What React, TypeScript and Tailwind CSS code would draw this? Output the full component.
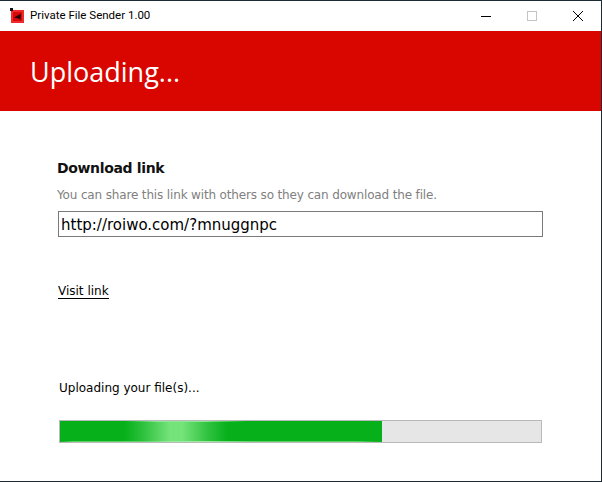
function AppIcon() {
  return (
    <svg width="16" height="16" viewBox="0 0 16 16" className="shrink-0">
      <rect x="1" y="2" width="13" height="13" fill="#ee2a2a" />
      <rect x="3" y="4" width="9" height="9" fill="#d80808" />
      <rect x="0" y="0" width="3" height="3" fill="#111" />
      <path d="M4 9.5 11 5.5 10.5 12 8.5 10.5Z" fill="#2a0505" />
    </svg>
  );
}

const gloss =
  'linear-gradient(90deg,#06b01b 0%,#06b01b 20%,#2fc23f 26%,#74e37a 34%,#74e37a 38%,#2fc23f 46%,#06b01b 52%,#06b01b 100%)';

export default function App() {
  return (
    <div className="flex h-[482px] w-[602px] flex-col overflow-hidden border border-l-0 border-[#1c2b36] bg-white font-['DejaVu_Sans',sans-serif]">
      {/* title bar */}
      <div className="flex h-[30px] shrink-0 items-center bg-white pl-[10px]">
        <AppIcon />
        <span className="ml-[4px] font-['Roboto',sans-serif] text-[11.5px] text-black">
          Private File Sender 1.00
        </span>
        <div className="ml-auto flex items-center">
          <div className="flex h-[30px] w-[46px] items-center justify-center">
            <svg width="10" height="10" viewBox="0 0 10 10">
              <path d="M0 5.5H10" stroke="#000" strokeWidth="1" />
            </svg>
          </div>
          <div className="flex h-[30px] w-[46px] items-center justify-center">
            <svg width="10" height="10" viewBox="0 0 10 10">
              <rect x="0.5" y="0.5" width="9" height="9" fill="none" stroke="#c4c4c4" />
            </svg>
          </div>
          <div className="flex h-[30px] w-[46px] items-center justify-center">
            <svg width="10" height="10" viewBox="0 0 10 10">
              <path d="M0 0 10 10M10 0 0 10" stroke="#000" strokeWidth="1" />
            </svg>
          </div>
        </div>
      </div>

      {/* red header */}
      <div className="flex h-[80px] shrink-0 items-center bg-[#d90600] pl-[30px] pt-[3px]">
        <h1 className="font-['Open_Sans',sans-serif] text-[27px] text-white">Uploading...</h1>
      </div>

      {/* body */}
      <div className="flex flex-1 flex-col pl-[57px] pr-[58px] pt-[47px]">
        <div className="text-[14px] leading-[20px] font-bold tracking-[-0.35px] text-[#111]">Download link</div>
        <p className="mt-[9px] text-[12px] leading-[16px] tracking-[-0.15px] text-[#808080]">
          You can share this link with others so they can download the file.
        </p>
        <input
          readOnly
          value="http://roiwo.com/?mnuggnpc"
          className="mt-[8px] ml-[1px] h-[26px] w-[485px] border border-[#7a7a7a] px-[2px] pt-[1px] text-[15px] text-black outline-none"
        />
        <a className="mt-[48px] ml-[1px] w-fit border-b border-black text-[12px] leading-[13px] text-black">
          Visit link
        </a>
        <div className="mt-[81px] pl-[2px] text-[12px] leading-[16px] text-black">Uploading your file(s)...</div>
        <div className="mt-[24px] ml-[2px] h-[23px] w-[483px] border border-[#b9b9b9] bg-[#e6e6e6]">
          <div className="flex h-full w-[322px] flex-col">
            <div className="h-[1px] bg-[linear-gradient(90deg,#06b01b_0%,#06b01b_20%,#8fe894_30%,#8fe894_45%,#06b01b_58%,#06b01b_100%)]" />
            <div className="flex-1" style={{ backgroundImage: gloss }} />
            <div className="h-[1px] bg-[linear-gradient(90deg,#06b01b_0%,#5fd268_4%,#5fd268_25%,#9cec9f_35%,#9cec9f_45%,#5fd268_60%,#5fd268_92%,#06b01b_100%)]" />
          </div>
        </div>
      </div>
    </div>
  );
}
